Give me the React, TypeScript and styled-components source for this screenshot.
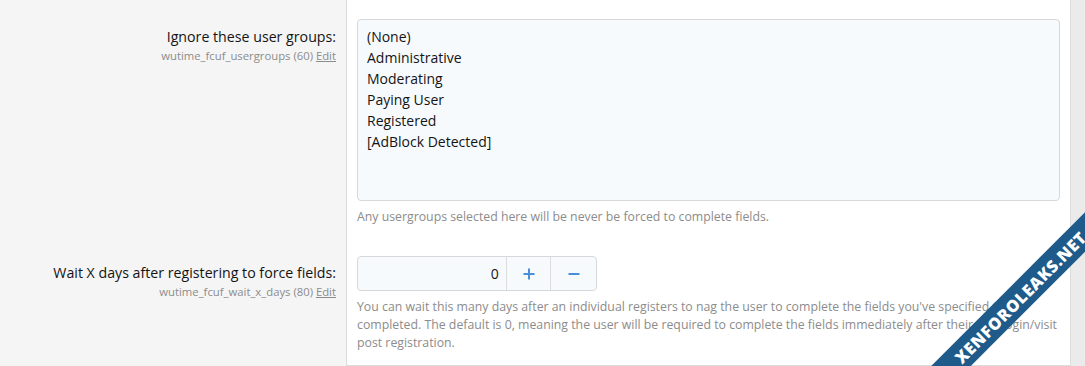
import React from "react";
import styled, { createGlobalStyle } from "styled-components";

const Global = createGlobalStyle`
  html, body { margin: 0; padding: 0; background: #fff; }
  body {
    font-family: "Open Sans", "Noto Sans", "DejaVu Sans", sans-serif;
    color: #141414;
    -webkit-font-smoothing: antialiased;
  }
`;

const Page = styled.div`
  display: flex;
  width: 1085px;
  height: 366px;
  overflow: hidden;
  position: relative;
`;

const Main = styled.div`
  width: 1070px;
  border-right: 1px solid #dcdcdc;
  display: flex;
  flex-direction: column;
`;

const Gutter = styled.div`
  flex: 1;
  background: #ebebeb;
`;

const Row = styled.div<{ $last?: boolean }>`
  display: grid;
  grid-template-columns: 346px 1fr;
  flex: ${(p) => (p.$last ? "1" : "none")};
`;

const Term = styled.div<{ $pt: number }>`
  background: #f5f5f5;
  text-align: right;
  padding: ${(p) => p.$pt}px 10px 0 10px;
`;

const Label = styled.div`
  font-size: 14.2px;
  line-height: 20px;
  color: #141414;
`;

const Hint = styled.div`
  font-size: 11.3px;
  line-height: 17px;
  color: #8c8c8c;

  a {
    color: #8c8c8c;
    text-decoration: underline;
  }
`;

const Desc = styled.div<{ $pt: number; $pb: number; $bottom?: boolean }>`
  border-left: 1px solid #dcdcdc;
  border-bottom: ${(p) => (p.$bottom ? "1px solid #dcdcdc" : "none")};
  padding: ${(p) => p.$pt}px 10px ${(p) => p.$pb}px 10px;
`;

const ListBox = styled.div`
  height: 164px;
  border: 1px solid #d8d8d8;
  border-radius: 4px;
  background: #f7fafd;
  padding: 6px 9px 10px;
  font-size: 14px;
  line-height: 21px;
  color: #141414;
`;

const Explain = styled.div`
  margin-top: 7px;
  font-size: 12.3px;
  line-height: 18px;
  color: #8c8c8c;
`;

const Spinner = styled.div`
  display: flex;
  width: 240px;
  height: 35px;
  border: 1px solid #d8d8d8;
  border-radius: 4px;
  background: #f7fafd;
  box-sizing: border-box;
  overflow: hidden;
`;

const NumberField = styled.div`
  width: 149px;
  display: flex;
  align-items: center;
  justify-content: flex-end;
  padding-right: 7px;
  box-sizing: border-box;
  font-size: 14px;
  color: #141414;
`;

const StepButton = styled.div<{ $w: number }>`
  width: ${(p) => p.$w}px;
  border-left: 1px solid #dcdcdc;
  display: flex;
  align-items: center;
  justify-content: center;
`;

const Ribbon = styled.div`
  position: absolute;
  left: 820px;
  top: 283px;
  width: 400px;
  height: 28px;
  background: #1e5b8a;
  transform: rotate(-45deg);
  transform-origin: 50% 50%;
  display: flex;
  align-items: center;
  justify-content: center;
  color: #fff;
  font-family: "Open Sans", "DejaVu Sans", sans-serif;
  font-weight: 800;
  font-size: 16.5px;
  letter-spacing: 0.5px;
  white-space: nowrap;
`;

const groups = [
  "(None)",
  "Administrative",
  "Moderating",
  "Paying User",
  "Registered",
  "[AdBlock Detected]",
];

const Plus = () => (
  <svg width="12" height="12" viewBox="0 0 12 12">
    <path d="M6 0.5v11M0.5 6h11" stroke="#4a8fd6" strokeWidth="2" />
  </svg>
);

const Minus = () => (
  <svg width="12" height="12" viewBox="0 0 12 12">
    <path d="M0.5 6h11" stroke="#4a8fd6" strokeWidth="2" />
  </svg>
);

export default function App() {
  return (
    <>
      <Global />
      <Page>
        <Main>
          <Row>
            <Term $pt={27}>
              <Label>Ignore these user groups:</Label>
              <Hint>
                wutime_fcuf_usergroups (60) <a>Edit</a>
              </Hint>
            </Term>
            <Desc $pt={19} $pb={14}>
              <ListBox>
                {groups.map((g) => (
                  <div key={g}>{g}</div>
                ))}
              </ListBox>
              <Explain>
                Any usergroups selected here will be never be forced to complete fields.
              </Explain>
            </Desc>
          </Row>
          <Row $last>
            <Term $pt={23}>
              <Label>Wait X days after registering to force fields:</Label>
              <Hint>
                wutime_fcuf_wait_x_days (80) <a>Edit</a>
              </Hint>
            </Term>
            <Desc $pt={16} $pb={10} $bottom>
              <Spinner>
                <NumberField>0</NumberField>
                <StepButton $w={44}>
                  <Plus />
                </StepButton>
                <StepButton $w={45}>
                  <Minus />
                </StepButton>
              </Spinner>
              <Explain>
                You can wait this many days after an individual registers to nag the user to complete the fields you've specified to be
                completed. The default is 0, meaning the user will be required to complete the fields immediately after their first login/visit
                post registration.
              </Explain>
            </Desc>
          </Row>
        </Main>
        <Gutter />
        <Ribbon>XENFOROLEAKS.NET</Ribbon>
      </Page>
    </>
  );
}
